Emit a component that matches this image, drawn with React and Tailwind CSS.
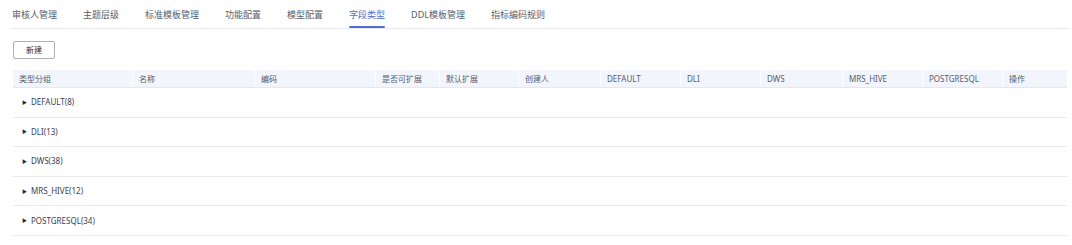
import React, { useState } from 'react';

const tabs = ['审核人管理', '主题层级', '标准模板管理', '功能配置', '模型配置', '字段类型', 'DDL模板管理', '指标编码规则'];

const columns = [
  { label: '类型分组', w: 'w-[119px]' },
  { label: '名称', w: 'w-[122px]' },
  { label: '编码', w: 'w-[121px]' },
  { label: '是否可扩展', w: 'w-[64px]' },
  { label: '默认扩展', w: 'w-[79px]' },
  { label: '创建人', w: 'w-[82px]' },
  { label: 'DEFAULT', w: 'w-[80px]' },
  { label: 'DLI', w: 'w-[80px]' },
  { label: 'DWS', w: 'w-[82px]' },
  { label: 'MRS_HIVE', w: 'w-[80px]' },
  { label: 'POSTGRESQL', w: 'w-[80px]' },
  { label: '操作', w: 'flex-1' },
];

const groups = [
  { name: 'DEFAULT', count: 8 },
  { name: 'DLI', count: 13 },
  { name: 'DWS', count: 38 },
  { name: 'MRS_HIVE', count: 12 },
  { name: 'POSTGRESQL', count: 34 },
];

export default function App() {
  const [activeTab, setActiveTab] = useState('字段类型');

  return (
    <div
      className="w-[1072px] h-[245px] bg-white pl-[12px] pr-[4px] overflow-hidden"
      style={{ fontFamily: '"Noto Sans", "Noto Sans CJK SC", sans-serif' }}
    >
      {/* Tabs */}
      <div className="flex gap-[26px] h-[29px] border-b border-[#e6e8ee]">
        {tabs.map((t) => (
          <button
            key={t}
            onClick={() => setActiveTab(t)}
            className={`relative h-full text-[9px] leading-none pt-[1px] ${
              activeTab === t ? 'text-[#526ecc]' : 'text-[#575d6c]'
            }`}
          >
            {t}
            {activeTab === t && (
              <span className="absolute left-0 right-0 bottom-[0px] h-[2px] bg-[#526ecc] rounded-sm"></span>
            )}
          </button>
        ))}
      </div>

      {/* Toolbar */}
      <div className="flex pt-[12px] pl-[1px]">
        <button className="w-[42px] h-[18px] border border-[#adb0b8] rounded-[2px] text-[8px] text-[#252b3a] leading-none">
          新建
        </button>
      </div>

      {/* Table */}
      <div className="mt-[11px] ml-[1px] mr-[1px]">
        <div className="flex h-[18px] bg-[#f2f5fc] border-b border-[#e6e8ee]">
          {columns.map((c, i) => (
            <div
              key={c.label}
              className={`${c.w} flex items-center pl-[6px] text-[8px] text-[#575d6c] ${
                i > 0 ? 'border-l border-white' : ''
              }`}
            >
              {c.label}
            </div>
          ))}
        </div>
        {groups.map((g) => (
          <div key={g.name} className="flex items-center h-[29.6px] border-b border-[#e8e8ee] pl-[9px]">
            <span className="text-[5px] text-[#252b3a] mr-[4px] leading-none">▶</span>
            <span className="text-[8px] text-[#3c4150]">
              {g.name}({g.count})
            </span>
          </div>
        ))}
      </div>
    </div>
  );
}
